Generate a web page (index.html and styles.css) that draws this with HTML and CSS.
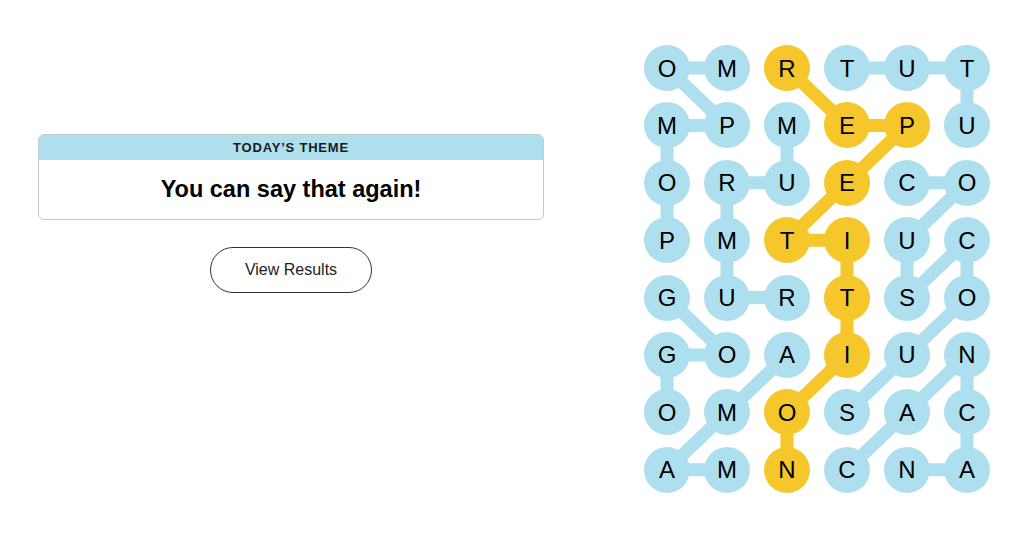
FILE: index.html
```html
<!DOCTYPE html>
<html lang="en">
  <head>
    <meta charset="UTF-8" />
    <meta name="viewport" content="width=device-width, initial-scale=1.0" />
    <title>Strands</title>
    <link rel="stylesheet" href="styles.css">
  </head>
  <body>
    <div class="game">
      <div class="panel">
        <div class="theme">
          <div class="theme-label">Today’s Theme</div>
          <div class="theme-title">You can say that again!</div>
        </div>
        <button class="results-btn">View Results</button>
      </div>

      <div class="board">
        <svg class="links" viewBox="0 0 346 448" width="346" height="448">
          <g class="found">
            <line x1="23" y1="23" x2="83" y2="23" />
            <line x1="23" y1="23" x2="83" y2="80.4" />
            <line x1="23" y1="80.4" x2="83" y2="80.4" />
            <line x1="23" y1="80.4" x2="23" y2="137.8" />
            <line x1="23" y1="137.8" x2="23" y2="195.2" />
            <line x1="83" y1="137.8" x2="143" y2="137.8" />
            <line x1="83" y1="137.8" x2="83" y2="195.2" />
            <line x1="83" y1="195.2" x2="83" y2="252.6" />
            <line x1="83" y1="252.6" x2="143" y2="252.6" />
            <line x1="143" y1="80.4" x2="143" y2="137.8" />
            <line x1="203" y1="23" x2="323" y2="23" />
            <line x1="323" y1="23" x2="323" y2="80.4" />
            <line x1="263" y1="137.8" x2="323" y2="137.8" />
            <line x1="323" y1="137.8" x2="263" y2="195.2" />
            <line x1="263" y1="195.2" x2="263" y2="252.6" />
            <line x1="263" y1="252.6" x2="323" y2="195.2" />
            <line x1="323" y1="195.2" x2="323" y2="252.6" />
            <line x1="323" y1="252.6" x2="263" y2="310" />
            <line x1="263" y1="310" x2="203" y2="367.4" />
            <line x1="23" y1="252.6" x2="83" y2="310" />
            <line x1="23" y1="310" x2="83" y2="310" />
            <line x1="23" y1="310" x2="23" y2="367.4" />
            <line x1="143" y1="310" x2="83" y2="367.4" />
            <line x1="83" y1="367.4" x2="23" y2="424.8" />
            <line x1="23" y1="424.8" x2="83" y2="424.8" />
            <line x1="203" y1="424.8" x2="263" y2="367.4" />
            <line x1="263" y1="367.4" x2="323" y2="310" />
            <line x1="323" y1="310" x2="323" y2="424.8" />
            <line x1="263" y1="424.8" x2="323" y2="424.8" />
          </g>
          <g class="spangram">
            <line x1="143" y1="23" x2="203" y2="80.4" />
            <line x1="203" y1="80.4" x2="263" y2="80.4" />
            <line x1="263" y1="80.4" x2="203" y2="137.8" />
            <line x1="203" y1="137.8" x2="143" y2="195.2" />
            <line x1="143" y1="195.2" x2="203" y2="195.2" />
            <line x1="203" y1="195.2" x2="203" y2="310" />
            <line x1="203" y1="310" x2="143" y2="367.4" />
            <line x1="143" y1="367.4" x2="143" y2="424.8" />
          </g>
        </svg>

        <div class="grid">
          <span class="cell">O</span><span class="cell">M</span><span class="cell gold">R</span><span class="cell">T</span><span class="cell">U</span><span class="cell">T</span>
          <span class="cell">M</span><span class="cell">P</span><span class="cell">M</span><span class="cell gold">E</span><span class="cell gold">P</span><span class="cell">U</span>
          <span class="cell">O</span><span class="cell">R</span><span class="cell">U</span><span class="cell gold">E</span><span class="cell">C</span><span class="cell">O</span>
          <span class="cell">P</span><span class="cell">M</span><span class="cell gold">T</span><span class="cell gold">I</span><span class="cell">U</span><span class="cell">C</span>
          <span class="cell">G</span><span class="cell">U</span><span class="cell">R</span><span class="cell gold">T</span><span class="cell">S</span><span class="cell">O</span>
          <span class="cell">G</span><span class="cell">O</span><span class="cell">A</span><span class="cell gold">I</span><span class="cell">U</span><span class="cell">N</span>
          <span class="cell">O</span><span class="cell">M</span><span class="cell gold">O</span><span class="cell">S</span><span class="cell">A</span><span class="cell">C</span>
          <span class="cell">A</span><span class="cell">M</span><span class="cell gold">N</span><span class="cell">C</span><span class="cell">N</span><span class="cell">A</span>
        </div>
      </div>
    </div>
  </body>
</html>
```

FILE: styles.css
```css
body {
  font-family: "Liberation Sans", Arial, sans-serif;
  margin: 0;
  padding: 0;
  background-color: #fff;
  color: #000;
}

.game {
  display: flex;
  align-items: flex-start;
  gap: 100px;
  padding: 45px 0 0 38px;
}

.panel {
  width: 506px;
  margin-top: 89px;
  display: flex;
  flex-direction: column;
  align-items: center;
}

.theme {
  width: 100%;
  box-sizing: border-box;
  border: 1px solid #c9c9c9;
  border-radius: 6px;
  overflow: hidden;
}

.theme-label {
  height: 25px;
  line-height: 26px;
  background-color: #aedfee;
  text-align: center;
  text-transform: uppercase;
  font-size: 13px;
  font-weight: bold;
  letter-spacing: 0.8px;
  color: #1a1a1a;
}

.theme-title {
  height: 59px;
  display: flex;
  justify-content: center;
  align-items: center;
  font-size: 23.5px;
  font-weight: bold;
}

.results-btn {
  margin-top: 27px;
  width: 162px;
  height: 46px;
  border: 1px solid #333;
  border-radius: 23px;
  background-color: #fff;
  font-family: inherit;
  font-size: 16px;
  color: #222;
  cursor: pointer;
}

.board {
  position: relative;
  width: 346px;
  height: 448px;
}

.links {
  position: absolute;
  top: 0;
  left: 0;
}

.links line {
  stroke-width: 13;
}

.found line {
  stroke: #aedfee;
}

.spangram line {
  stroke: #f6c72b;
}

.grid {
  position: relative;
  display: grid;
  grid-template-columns: repeat(6, 46px);
  grid-auto-rows: 46px;
  column-gap: 14px;
  row-gap: 11.4px;
}

.cell {
  display: flex;
  justify-content: center;
  align-items: center;
  padding-top: 1px;
  box-sizing: border-box;
  border-radius: 50%;
  background-color: #aedfee;
  font-size: 24px;
  color: #000;
}

.cell.gold {
  background-color: #f6c72b;
}
```
